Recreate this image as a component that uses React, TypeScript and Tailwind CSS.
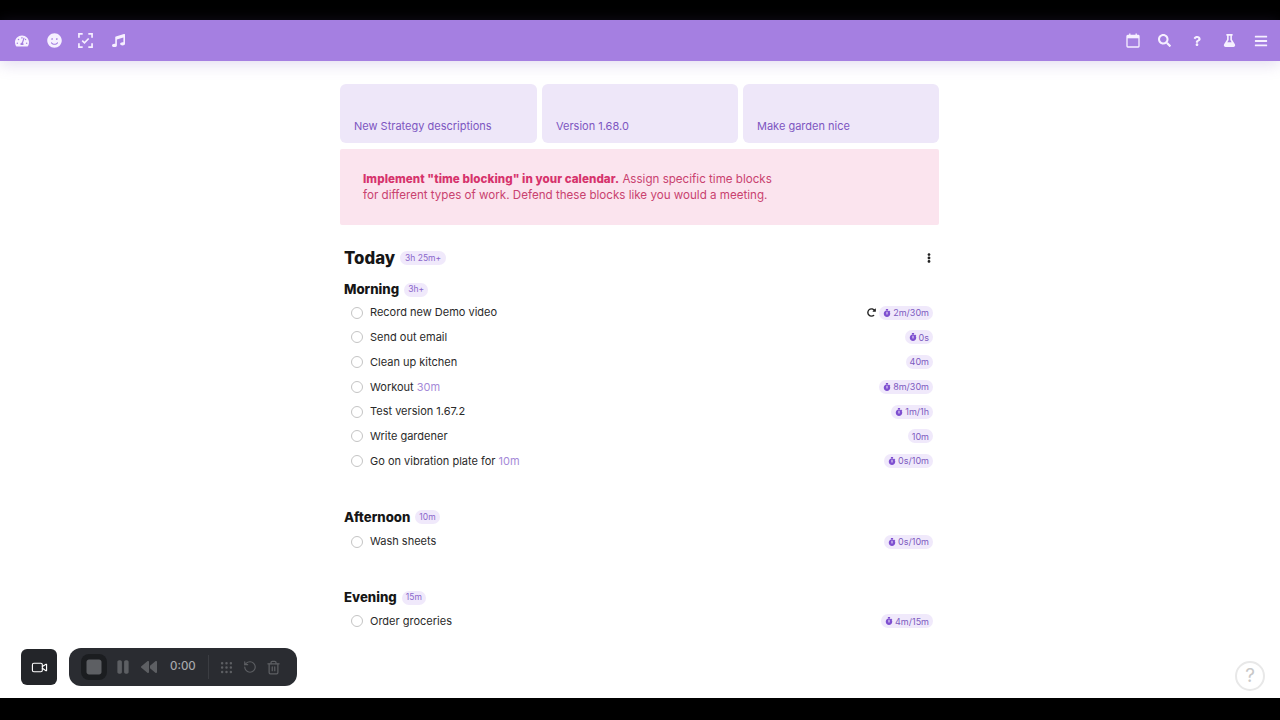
import { Grip, RotateCcw, Trash2, Video } from 'lucide-react';
import {
  FaBars,
  FaEllipsisV,
  FaFlask,
  FaMusic,
  FaQuestion,
  FaRedoAlt,
  FaSearch,
  FaSmile,
  FaStopwatch,
  FaTachometerAlt,
} from 'react-icons/fa';
import { FaBackward, FaPause, FaStop } from 'react-icons/fa6';

interface Task {
  title: string;
  hint?: string;
  time: string;
  timer?: boolean;
  active?: boolean;
}

const morning: Task[] = [
  { title: 'Record new Demo video', time: '2m/30m', timer: true, active: true },
  { title: 'Send out email', time: '0s', timer: true },
  { title: 'Clean up kitchen', time: '40m' },
  { title: 'Workout', hint: '30m', time: '8m/30m', timer: true },
  { title: 'Test version 1.67.2', time: '1m/1h', timer: true },
  { title: 'Write gardener', time: '10m' },
  { title: 'Go on vibration plate for', hint: '10m', time: '0s/10m', timer: true },
];

const ScanCheck = () => (
  <svg width="15" height="15" viewBox="0 0 16 16" fill="none" stroke="currentColor" strokeWidth="1.8">
    <path d="M1 5V1h4M11 1h4v4M15 11v4h-4M5 15H1v-4" />
    <path d="M4.5 8.2l2.4 2.3 4.5-4.6" />
  </svg>
);

const CalendarIcon = () => (
  <svg width="14" height="15" viewBox="0 0 14 15" fill="none" stroke="currentColor" strokeWidth="1.3">
    <rect x="1" y="2.5" width="12" height="11.5" rx="0.8" />
    <path d="M1 4h12" strokeWidth="2.6" />
    <path d="M3.8 0.5v2.5M10.2 0.5v2.5" />
  </svg>
);

const TaskRow = ({ task }: { task: Task }) => (
  <div className="flex h-[24.75px] items-center justify-between pl-[11px] pr-[6px]">
    <div className="flex items-center gap-[7px]">
      <span className="h-[12px] w-[12px] rounded-full border-[1.5px] border-[#c4c4c4]" />
      <p className="text-[11px] text-[#2a2a2a]">
        {task.title}
        {task.hint && <span className="text-[#a58ad8]"> {task.hint}</span>}
      </p>
    </div>
    <div className="flex items-center gap-[3px]">
      {task.active && <FaRedoAlt size={9} className="text-[#222]" />}
      <span className="flex h-[14px] items-center gap-[2px] rounded-full bg-[#f0e9fb] px-[4px] text-[9px] text-[#7d5bbf]">
        {task.timer && <FaStopwatch size={8} className="text-[#7e4fd0]" />}
        {task.time}
      </span>
    </div>
  </div>
);

const SectionHeading = ({ title, time }: { title: string; time: string }) => (
  <div className="flex items-center gap-[5px] pl-[4px]">
    <h3 className="text-[13.2px] font-extrabold text-[#161616]">{title}</h3>
    <span className="rounded-full bg-[#f0e9fb] px-[4px] py-[1.5px] text-[8.5px] leading-[11px] text-[#8a67cb]">{time}</span>
  </div>
);

export default function App() {
  return (
    <div className="relative flex h-[720px] flex-col overflow-hidden bg-white font-['Inter','Noto_Sans',sans-serif]">
      <div className="h-5 bg-black" />
      <header className="z-10 flex h-[41px] items-center justify-between bg-[#a57fe1] text-[#f6f0ff] shadow-[0_3px_16px_rgba(120,90,180,0.22)]">
        <div className="flex items-center">
          <span className="flex w-[32px] justify-center pl-[12px]"><FaTachometerAlt size={14} /></span>
          <span className="flex w-[32px] justify-center pl-[12px]"><FaSmile size={15} /></span>
          <span className="flex w-[32px] justify-center pl-[11px]"><ScanCheck /></span>
          <span className="flex w-[32px] justify-center pl-[12px]"><FaMusic size={13} /></span>
        </div>
        <div className="flex items-center pr-[3px]">
          <span className="flex w-[32px] justify-center pr-[1px]"><CalendarIcon /></span>
          <span className="flex w-[32px] justify-center pr-[1px]"><FaSearch size={13} /></span>
          <span className="flex w-[32px] justify-center"><FaQuestion size={10} /></span>
          <span className="flex w-[32px] justify-center"><FaFlask size={13} /></span>
          <span className="flex w-[32px] justify-center"><FaBars size={14} /></span>
        </div>
      </header>

      <main className="flex-1 overflow-hidden">
        <div className="ml-[340px] w-[599px] pt-[23px]">
          <div className="grid h-[59px] grid-cols-[197px_196px_196px] gap-[5px]">
            {['New Strategy descriptions', 'Version 1.68.0', 'Make garden nice'].map((label) => (
              <div key={label} className="flex items-end rounded-[6px] bg-[#eee7f9] pb-[9px] pl-[14px]">
                <p className="text-[11px] leading-[16px] text-[#7d56c1]">{label}</p>
              </div>
            ))}
          </div>

          <div className="mt-[6px] flex h-[76px] items-center rounded-[2px] bg-[#fbe4ee] pl-[23px]">
            <p className="w-[425px] text-[11.6px] leading-[16px] text-[#c9426f]">
              <strong className="font-extrabold tracking-[0.06px] text-[#d6336c]">Implement "time blocking" in your calendar.</strong>{' '}
              Assign specific time blocks for different types of work. Defend these blocks like you would a meeting.
            </p>
          </div>

          <div className="mt-[22px] flex h-[22px] items-center justify-between pl-[4px] pr-[5px]">
            <div className="flex items-center gap-[5px]">
              <h2 className="text-[16.8px] font-extrabold leading-[22px] text-[#161616]">Today</h2>
              <span className="rounded-full bg-[#f0e9fb] px-[5px] py-[1px] text-[8.5px] leading-[12px] text-[#8a67cb]">3h 25m+</span>
            </div>
            <FaEllipsisV size={10} className="text-[#222]" />
          </div>

          <div className="mt-[11px]">
            <SectionHeading title="Morning" time="3h+" />
            <div className="mt-[0.5px]">
              {morning.map((task) => (
                <TaskRow key={task.title} task={task} />
              ))}
            </div>
          </div>

          <div className="mt-[34px]">
            <SectionHeading title="Afternoon" time="10m" />
            <div className="mt-[2px]">
              <TaskRow task={{ title: 'Wash sheets', time: '0s/10m', timer: true }} />
            </div>
          </div>

          <div className="mt-[34px]">
            <SectionHeading title="Evening" time="15m" />
            <div className="mt-[1px]">
              <TaskRow task={{ title: 'Order groceries', time: '4m/15m', timer: true }} />
            </div>
          </div>
        </div>
      </main>

      <div className="h-[22px] bg-black" />

      {/* recorder widget floating over the page */}
      <div className="absolute bottom-[34px] left-[21px] flex items-center gap-[12px]">
        <div className="flex h-[36px] w-[36px] items-center justify-center rounded-[6px] bg-[#232529] text-white">
          <Video size={17} strokeWidth={1.6} />
        </div>
        <div className="flex h-[38px] w-[228px] items-center rounded-[12px] bg-[#2a2c31] pl-[12px]">
          <span className="flex h-[26px] w-[26px] items-center justify-center rounded-[8px] bg-[#1b1d20]">
            <FaStop size={20} className="text-[#5d5f63]" />
          </span>
          <FaPause size={18} className="ml-[7px] text-[#5d5f63]" />
          <FaBackward size={16} className="ml-[9px] text-[#5d5f63]" />
          <span className="ml-[13px] text-[11.5px] font-medium text-[#a6a7aa]">0:00</span>
          <span className="ml-[12px] h-[24px] w-px bg-[#3b3d42]" />
          <Grip size={15} className="ml-[10px] text-[#5d5f63]" />
          <RotateCcw size={14} className="ml-[9px] text-[#5d5f63]" />
          <Trash2 size={15} className="ml-[9px] text-[#5d5f63]" />
        </div>
      </div>

      <div className="absolute bottom-[29px] right-[15px] flex h-[30px] w-[30px] items-center justify-center rounded-full border-2 border-[#e8e8e8] bg-white text-[19px] text-[#c8c8c8]">
        ?
      </div>
    </div>
  );
}
